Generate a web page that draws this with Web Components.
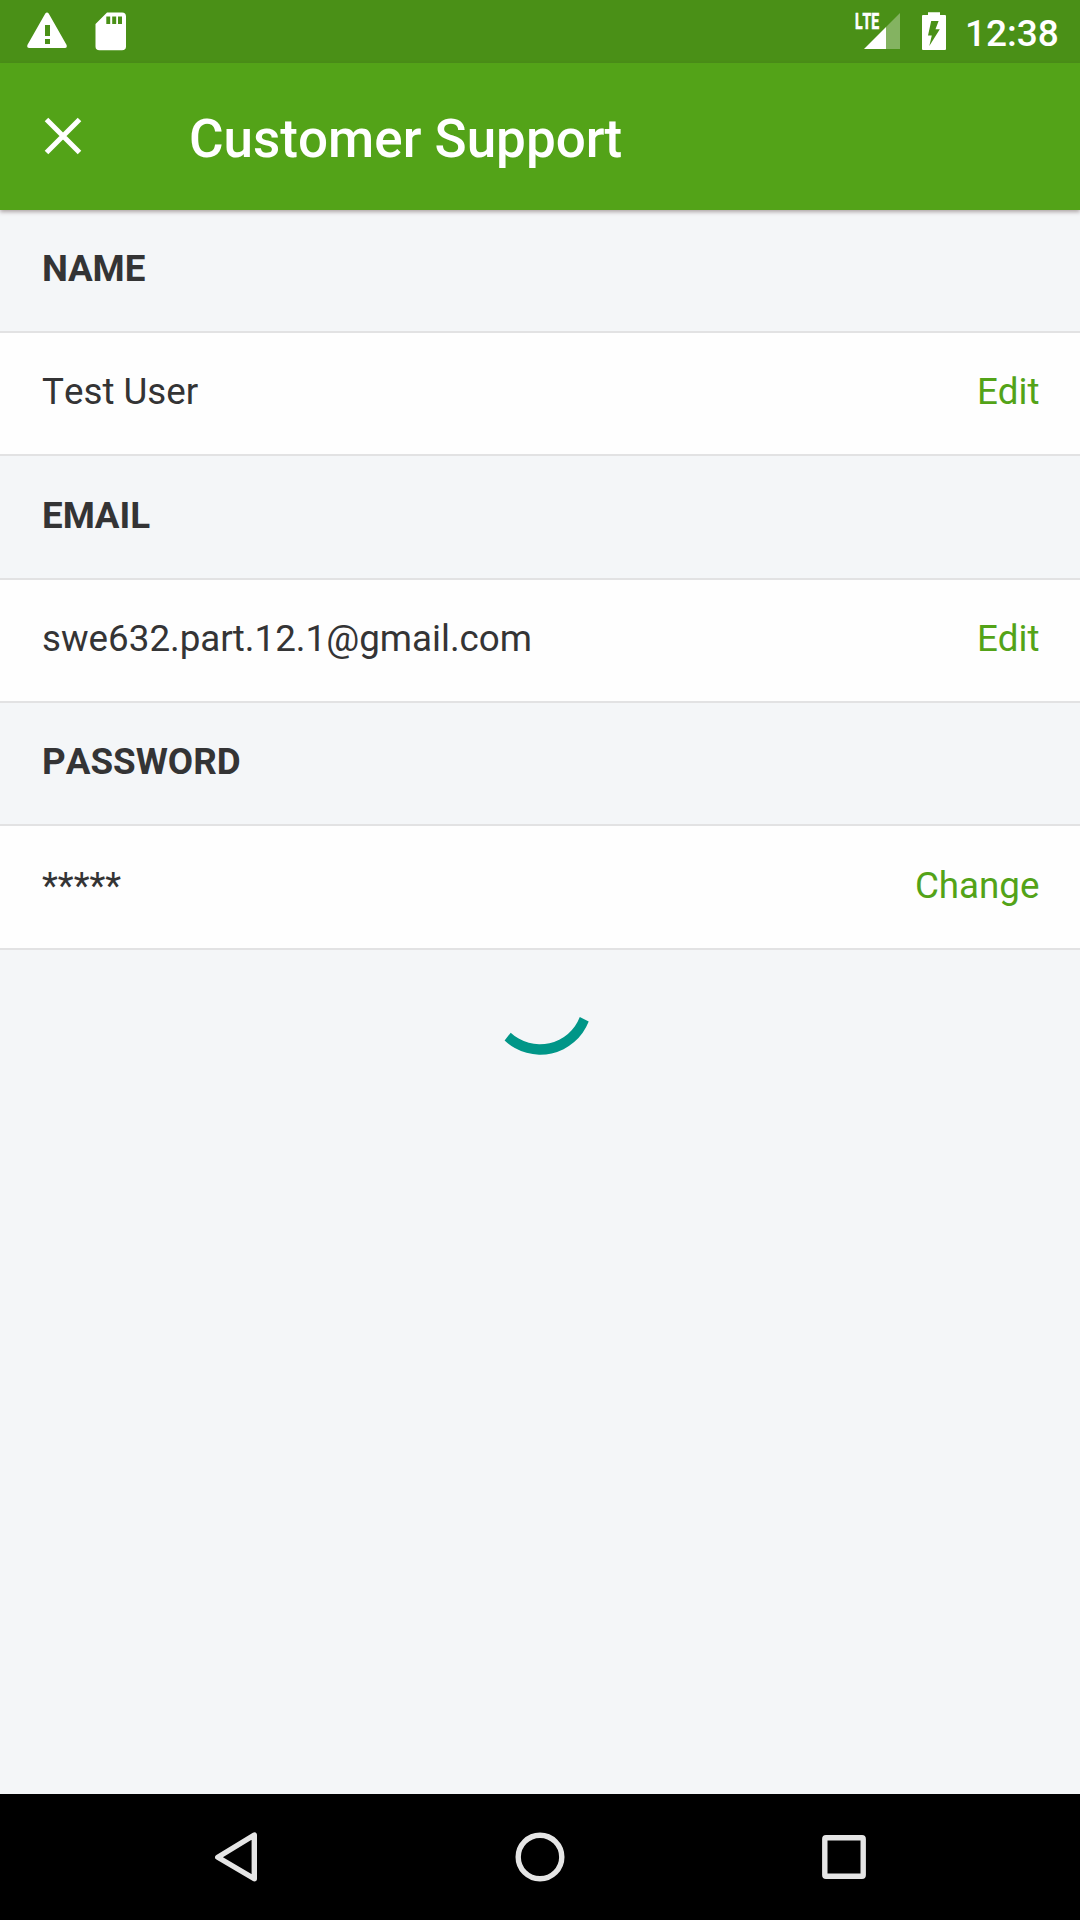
<!DOCTYPE html>
<html lang="en">
<head>
<meta charset="utf-8">
<title>Customer Support</title>
<style>
html,body{margin:0;padding:0}
body{width:1080px;height:1920px;overflow:hidden;font-family:Roboto,"Noto Sans",sans-serif;font-size:36.75px;font-kerning:none;background:#f4f6f8}
</style>
</head>
<body>
<support-screen></support-screen>
<script>
const define = (name, html) => customElements.define(name, class extends HTMLElement {
  constructor() {
    super();
    this.attachShadow({ mode: 'open' }).innerHTML = html;
  }
});

define('status-bar', `
<style>
:host{display:flex;justify-content:space-between;height:63px;background:#4a9017;color:#fff}
svg{display:block}
.right{display:flex}
.time{width:115px;padding-top:11.5px;box-sizing:border-box;font-size:37px;font-weight:500;line-height:43px;white-space:nowrap}
</style>
<svg width="140" height="63" viewBox="0 0 140 63" fill="#fff">
  <path fill-rule="evenodd" d="M45.3 13.6Q47 11.6 48.7 13.6L66.6 45Q67.4 48 65 48H29.3Q26.6 48 27.4 45ZM45 25V36H50V25ZM45 39V44H50V39Z"/>
  <path fill-rule="evenodd" d="M107 12.5H122Q126 12.5 126 16.5V46.5Q126 50.3 122 50.3H99.5Q95.5 50.3 95.5 46.5V24ZM106.3 16.5V24H110.2V16.5ZM112.2 16.5V24H116.2V16.5ZM118 16.5V24H122V16.5Z"/>
</svg>
<div class="right">
<svg width="116" height="63" viewBox="849 0 116 63" fill="#fff">
  <path fill-opacity=".32" d="M886 27L900 13V49H886Z"/><path d="M864 49L886 27V49Z"/>
  <text x="855" y="29" font-family="Roboto" font-weight="700" font-size="21.5" textLength="24" lengthAdjust="spacingAndGlyphs" stroke="#fff" stroke-width=".7">LTE</text>
  <path fill-rule="evenodd" d="M928 12.3H940V15H945Q946 15 946 16V49Q946 50 945 50H923Q922 50 922 49V16Q922 15 923 15H928ZM931.2 21L928 35.5H931.8L929.3 46L939.8 29.2H935.5L938.6 21Z"/>
</svg>
<span class="time">12:38</span>
</div>`);

define('app-bar', `
<style>
:host{display:flex;height:147px;background:#53a318;color:#fff;position:relative;z-index:1;box-shadow:0 2px 4px rgba(70,45,45,.4)}
svg{display:block;width:189px;height:147px}
h1{margin:0;padding-top:45px;font-size:53px;line-height:62px;font-weight:500;white-space:nowrap}
</style>
<svg viewBox="0 63 189 147"><path d="M46.5 119.5L79.5 152.5M79.5 119.5L46.5 152.5" stroke="#fff" stroke-width="5"/></svg>
<h1><slot></slot></h1>`);

const row = `display:flex;align-items:center;justify-content:space-between;box-sizing:border-box;height:123px;padding:0 40.5px 5px 42px;border-bottom:2px solid #e2e2e3;color:#343435;line-height:43px;white-space:nowrap`;
define('section-title', `<style>:host{${row};font-weight:700}</style><slot></slot>`);
define('setting-row', `
<style>
:host{${row};background:#fefefe}
::slotted([slot=action]){color:#53a318}
</style>
<slot></slot><slot name="action"></slot>`);

define('loading-arc', `
<style>:host{display:flex;justify-content:center}svg{display:block}</style>
<svg width="126" height="126" viewBox="477 950 126 126"><path d="M588.7 1021.6A52 52 0 0 1 504.6 1040.5L510.7 1032.7A42.7 42.7 0 0 0 579.8 1017Z" fill="#009688"/></svg>`);

define('nav-bar', `
<style>
:host{display:flex;justify-content:center;height:126px;background:#000}
svg{display:block;width:304px;height:126px;fill:none;stroke:#e5e5e5;stroke-width:5.4;stroke-linejoin:round}
</style>
<svg viewBox="84 1794 304 126"><path d="M217.8 1857.2L254.3 1835V1878.8Z"/></svg>
<svg viewBox="388 1794 304 126"><circle cx="540" cy="1857" r="21.8"/></svg>
<svg viewBox="692 1794 304 126"><rect x="824.8" y="1837.8" width="38.4" height="38.4" rx="1.2"/></svg>`);

define('support-screen', `
<style>
:host{display:flex;flex-direction:column;height:1920px}
main{flex:1;min-height:0;background:#f4f6f8}
/* 370px for every three rows, on whole pixels */
main>:nth-child(3n){height:124px;padding-bottom:4px}
</style>
<status-bar></status-bar>
<app-bar>Customer Support</app-bar>
<main>
<section-title>NAME</section-title>
<setting-row>Test User<span slot="action">Edit</span></setting-row>
<section-title>EMAIL</section-title>
<setting-row>swe632.part.12.1@gmail.com<span slot="action">Edit</span></setting-row>
<section-title>PASSWORD</section-title>
<setting-row>*****<span slot="action">Change</span></setting-row>
<loading-arc></loading-arc>
</main>
<nav-bar></nav-bar>`);
</script>
</body>
</html>
